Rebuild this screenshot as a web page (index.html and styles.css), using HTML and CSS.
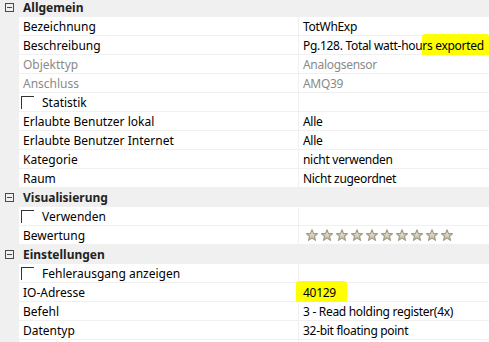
FILE: index.html
```html
<!DOCTYPE html>
<html>
<head>
<meta charset="utf-8">
<link rel="stylesheet" href="styles.css">
</head>
<body>
<div class="grid">
  <div class="cat"><span class="exp"></span><span class="cat-name">Allgemein</span></div>
  <div class="row"><div class="name">Bezeichnung</div><div class="val">TotWhExp</div></div>
  <div class="row"><div class="name">Beschreibung</div><div class="val">Pg.128. Total watt-hou<span class="hl hl1">rs exported</span></div></div>
  <div class="row dis"><div class="name">Objekttyp</div><div class="val">Analogsensor</div></div>
  <div class="row dis"><div class="name">Anschluss</div><div class="val">AMQ39</div></div>
  <div class="row"><div class="name chk"><span class="box"></span>Statistik</div><div class="val"></div></div>
  <div class="row"><div class="name">Erlaubte Benutzer lokal</div><div class="val">Alle</div></div>
  <div class="row"><div class="name">Erlaubte Benutzer Internet</div><div class="val">Alle</div></div>
  <div class="row"><div class="name">Kategorie</div><div class="val">nicht verwenden</div></div>
  <div class="row"><div class="name">Raum</div><div class="val">Nicht zugeordnet</div></div>
  <div class="cat"><span class="exp"></span><span class="cat-name">Visualisierung</span></div>
  <div class="row"><div class="name chk"><span class="box"></span>Verwenden</div><div class="val"></div></div>
  <div class="row"><div class="name">Bewertung</div><div class="val stars">
    <svg width="150" height="13" viewBox="0 0 150 13">
      <defs>
        <linearGradient id="sg" x1="0" y1="0" x2="0" y2="1">
          <stop offset="0" stop-color="#efece3"/>
          <stop offset="1" stop-color="#c2bba6"/>
        </linearGradient>
        <path id="st" d="M6 0.8 L7.5 4.6 L11.4 4.7 L8.4 7.2 L9.5 11.3 L6 9 L2.5 11.3 L3.6 7.2 L0.6 4.7 L4.5 4.6 Z" fill="url(#sg)" stroke="#a39c86" stroke-width="1.2" stroke-linejoin="round"/>
      </defs>
      <use href="#st" x="1"/><use href="#st" x="16"/><use href="#st" x="31"/><use href="#st" x="46"/><use href="#st" x="61"/>
      <use href="#st" x="76"/><use href="#st" x="91"/><use href="#st" x="106"/><use href="#st" x="121"/><use href="#st" x="136"/>
    </svg>
  </div></div>
  <div class="cat"><span class="exp"></span><span class="cat-name">Einstellungen</span></div>
  <div class="row"><div class="name chk"><span class="box"></span>Fehlerausgang anzeigen</div><div class="val"></div></div>
  <div class="row"><div class="name">IO-Adresse</div><div class="val"><span class="hl hl2">40129</span></div></div>
  <div class="row"><div class="name">Befehl</div><div class="val">3 - Read holding register(4x)</div></div>
  <div class="row"><div class="name">Datentyp</div><div class="val">32-bit floating point</div></div>
  <div class="row"><div class="name chk"><span class="box"></span></div><div class="val"></div></div>
</div>
</body>
</html>
```
FILE: styles.css
```css
html, body {
  margin: 0;
  padding: 0;
  background: #f0f0f0;
  overflow: hidden;
}
body {
  font-family: "Segoe UI", "Noto Sans", "Open Sans", sans-serif;
  font-size: 12px;
  color: #000;
}
.grid {
  margin-top: -2px;
  display: flex;
  flex-direction: column;
}
.cat {
  height: 19px;
  display: flex;
  align-items: center;
  background: #f0f0f0;
}
.exp {
  position: relative;
  width: 7px;
  height: 7px;
  border: 1px solid #4a4a4a;
  margin-left: 5px;
  flex: none;
}
.exp::after {
  content: "";
  position: absolute;
  left: 1px;
  top: 3px;
  width: 5px;
  height: 1px;
  background: #4a4a4a;
}
.cat-name {
  margin-left: 9px;
  font-weight: bold;
  color: #222;
}
.row {
  height: 19px;
  box-sizing: border-box;
  margin-left: 19px;
  background: #fff;
  border-bottom: 1px solid #f0f0f0;
  display: flex;
}
.name {
  width: 280px;
  box-sizing: border-box;
  padding-left: 4px;
  border-right: 1px solid #f0f0f0;
  display: flex;
  align-items: center;
  white-space: nowrap;
  flex: none;
}
.val {
  flex: 1;
  padding-left: 4px;
  display: flex;
  align-items: center;
  white-space: nowrap;
  letter-spacing: -0.3px;
}
.dis {
  color: #8a8a8a;
}
.chk {
  padding-left: 2px;
}
.box {
  width: 13px;
  height: 13px;
  box-sizing: border-box;
  border-top: 1px solid #333;
  border-left: 1px solid #333;
  margin-right: 8px;
  flex: none;
}
.stars svg {
  display: block;
  margin-left: 2px;
}
.hl {
  background: #ffff00;
  border-radius: 3px;
}
.hl1 {
  padding: 3px 5px 3px 0;
  margin-right: -5px;
}
.hl2 {
  padding: 3px 11px 3px 7px;
  margin-left: -7px;
}
```
